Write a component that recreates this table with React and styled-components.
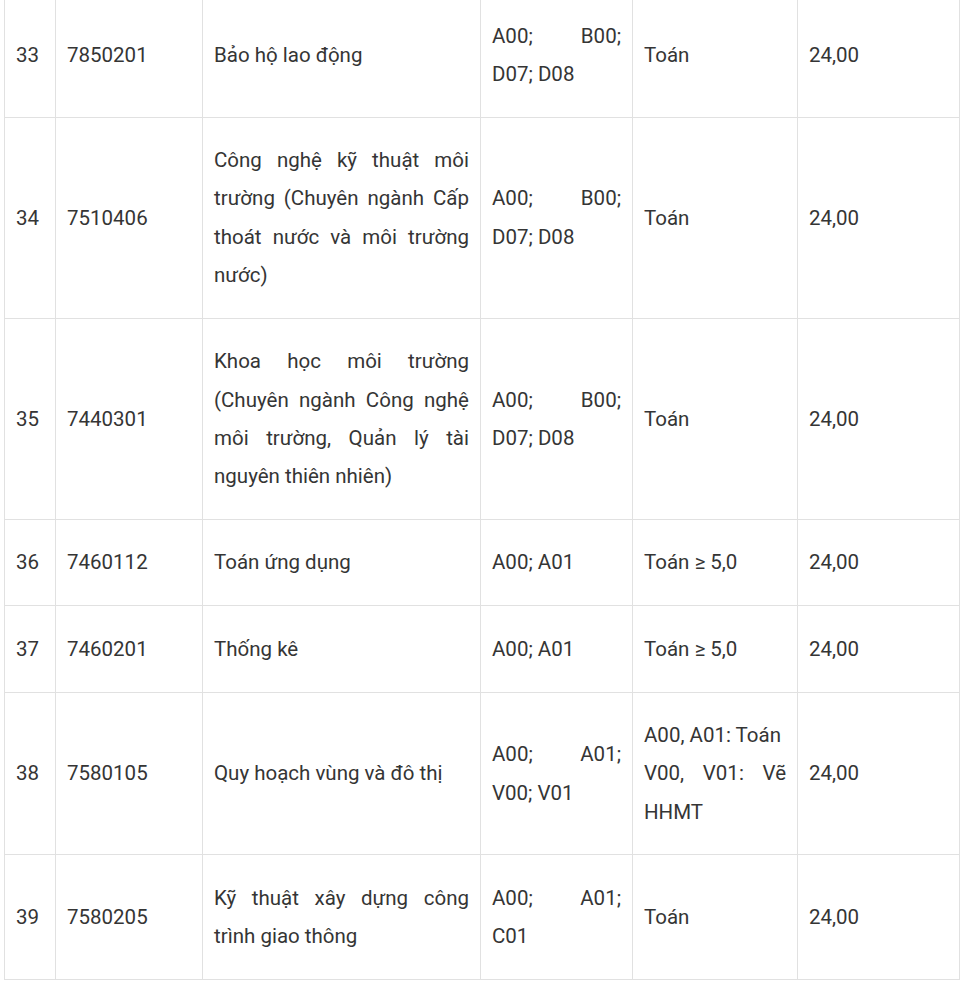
import React from "react";
import styled, { createGlobalStyle } from "styled-components";

const Global = createGlobalStyle`
  html, body { margin: 0; padding: 0; background: #fff; }
  body { font-family: Roboto, "Noto Sans", "Liberation Sans", sans-serif; overflow: hidden; }
`;

const Page = styled.div`
  padding-left: 4px;
  margin-top: -8px;
  width: 955px;
`;

const Table = styled.table`
  width: 955px;
  border-collapse: collapse;
  table-layout: fixed;
  color: #353535;
  font-size: 20.5px;
  line-height: 38.3px;
`;

const Cell = styled.td`
  border: 1.5px solid #e1e1e1;
  padding: 23.5px 11px;
  vertical-align: middle;
  text-align: ${(p) => (p.$justify ? "justify" : "left")};
`;

const Line = styled.span`
  display: block;
  text-align: justify;
  text-align-last: ${(p) => (p.$spread ? "justify" : "auto")};
`;

const cols = [51, 147, 278, 152, 165, 162];

/* A cell value is a string, or an array of lines: { text, spread } */
const rows = [
  ["33", "7850201", "Bảo hộ lao động", "A00; B00; D07; D08", "Toán", "24,00"],
  [
    "34",
    "7510406",
    "Công nghệ kỹ thuật môi trường (Chuyên ngành Cấp thoát nước và môi trường nước)",
    "A00; B00; D07; D08",
    "Toán",
    "24,00",
  ],
  [
    "35",
    "7440301",
    "Khoa học môi trường (Chuyên ngành Công nghệ môi trường, Quản lý tài nguyên thiên nhiên)",
    "A00; B00; D07; D08",
    "Toán",
    "24,00",
  ],
  ["36", "7460112", "Toán ứng dụng", "A00; A01", "Toán ≥ 5,0", "24,00"],
  ["37", "7460201", "Thống kê", "A00; A01", "Toán ≥ 5,0", "24,00"],
  [
    "38",
    "7580105",
    "Quy hoạch vùng và đô thị",
    "A00; A01; V00; V01",
    [{ text: "A00, A01: Toán" }, { text: "V00, V01: Vẽ HHMT" }],
    "24,00",
  ],
  [
    "39",
    "7580205",
    "Kỹ thuật xây dựng công trình giao thông",
    [{ text: "A00; A01;", spread: true }, { text: "C01" }],
    "Toán",
    "24,00",
  ],
];

function CellContent({ value }) {
  if (!Array.isArray(value)) return value;
  return value.map((l, i) => (
    <Line key={i} $spread={!!l.spread}>
      {l.text}
    </Line>
  ));
}

export default function App() {
  return (
    <>
      <Global />
      <Page>
        <Table>
          <colgroup>
            {cols.map((w, i) => (
              <col key={i} style={{ width: w }} />
            ))}
          </colgroup>
          <tbody>
            {rows.map((r) => (
              <tr key={r[0]}>
                {r.map((c, i) => (
                  <Cell key={i} $justify={i >= 2 && i <= 4}>
                    <CellContent value={c} />
                  </Cell>
                ))}
              </tr>
            ))}
          </tbody>
        </Table>
      </Page>
    </>
  );
}
